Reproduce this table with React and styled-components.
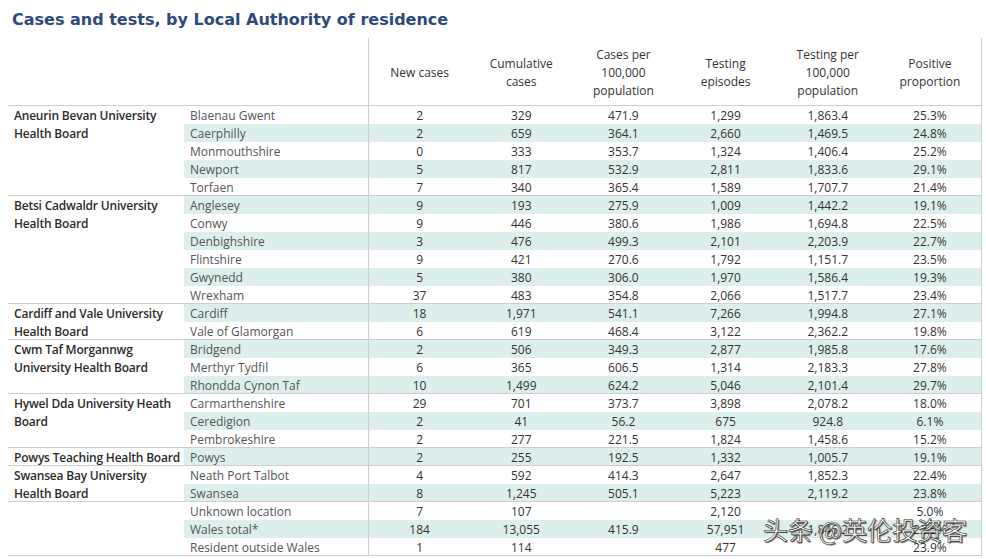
import React from 'react';
import styled, { createGlobalStyle } from 'styled-components';

const GlobalStyle = createGlobalStyle`
  html, body {
    margin: 0;
    padding: 0;
    background: #ffffff;
  }
  body {
    font-family: "Open Sans", "Liberation Sans", sans-serif;
  }
`;

const columns = [
  ['New cases'],
  ['Cumulative', 'cases'],
  ['Cases per', '100,000', 'population'],
  ['Testing', 'episodes'],
  ['Testing per', '100,000', 'population'],
  ['Positive', 'proportion'],
];

const groups = [
  {
    name: 'Aneurin Bevan University Health Board',
    rows: [
      ['Blaenau Gwent', '2', '329', '471.9', '1,299', '1,863.4', '25.3%'],
      ['Caerphilly', '2', '659', '364.1', '2,660', '1,469.5', '24.8%'],
      ['Monmouthshire', '0', '333', '353.7', '1,324', '1,406.4', '25.2%'],
      ['Newport', '5', '817', '532.9', '2,811', '1,833.6', '29.1%'],
      ['Torfaen', '7', '340', '365.4', '1,589', '1,707.7', '21.4%'],
    ],
  },
  {
    name: 'Betsi Cadwaldr University Health Board',
    rows: [
      ['Anglesey', '9', '193', '275.9', '1,009', '1,442.2', '19.1%'],
      ['Conwy', '9', '446', '380.6', '1,986', '1,694.8', '22.5%'],
      ['Denbighshire', '3', '476', '499.3', '2,101', '2,203.9', '22.7%'],
      ['Flintshire', '9', '421', '270.6', '1,792', '1,151.7', '23.5%'],
      ['Gwynedd', '5', '380', '306.0', '1,970', '1,586.4', '19.3%'],
      ['Wrexham', '37', '483', '354.8', '2,066', '1,517.7', '23.4%'],
    ],
  },
  {
    name: 'Cardiff and Vale University Health Board',
    rows: [
      ['Cardiff', '18', '1,971', '541.1', '7,266', '1,994.8', '27.1%'],
      ['Vale of Glamorgan', '6', '619', '468.4', '3,122', '2,362.2', '19.8%'],
    ],
  },
  {
    name: 'Cwm Taf Morgannwg University Health Board',
    rows: [
      ['Bridgend', '2', '506', '349.3', '2,877', '1,985.8', '17.6%'],
      ['Merthyr Tydfil', '6', '365', '606.5', '1,314', '2,183.3', '27.8%'],
      ['Rhondda Cynon Taf', '10', '1,499', '624.2', '5,046', '2,101.4', '29.7%'],
    ],
  },
  {
    name: 'Hywel Dda University Heath Board',
    rows: [
      ['Carmarthenshire', '29', '701', '373.7', '3,898', '2,078.2', '18.0%'],
      ['Ceredigion', '2', '41', '56.2', '675', '924.8', '6.1%'],
      ['Pembrokeshire', '2', '277', '221.5', '1,824', '1,458.6', '15.2%'],
    ],
  },
  {
    name: 'Powys Teaching Health Board',
    rows: [['Powys', '2', '255', '192.5', '1,332', '1,005.7', '19.1%']],
  },
  {
    name: 'Swansea Bay University Health Board',
    rows: [
      ['Neath Port Talbot', '4', '592', '414.3', '2,647', '1,852.3', '22.4%'],
      ['Swansea', '8', '1,245', '505.1', '5,223', '2,119.2', '23.8%'],
    ],
  },
  {
    name: '',
    rows: [
      ['Unknown location', '7', '107', '', '2,120', '', '5.0%'],
      ['Wales total*', '184', '13,055', '415.9', '57,951', '1,846.2', '22.5%'],
      ['Resident outside Wales', '1', '114', '', '477', '', '23.9%'],
    ],
  },
];

export default function App() {
  let index = 0;
  return (
    <Page>
      <GlobalStyle />
      <Title>Cases and tests, by Local Authority of residence</Title>
      <Table>
        <HeaderRow>
          <HeaderBlank />
          {columns.map((lines, i) => (
            <HeaderCell key={i} $first={i === 0}>
              {lines.map((l) => (
                <span key={l}>{l}</span>
              ))}
            </HeaderCell>
          ))}
        </HeaderRow>
        {groups.map((g, gi) => (
          <Group key={gi}>
            <GroupName>{g.name}</GroupName>
            <div>
              {g.rows.map((r) => {
                const shaded = index % 2 === 1;
                index += 1;
                return (
                  <Row key={r[0]} $shaded={shaded}>
                    <Area>{r[0]}</Area>
                    {r.slice(1).map((v, vi) => (
                      <Value key={vi} $first={vi === 0}>
                        {v}
                      </Value>
                    ))}
                  </Row>
                );
              })}
            </div>
          </Group>
        ))}
        <Watermark>头条 @英伦投资客</Watermark>
      </Table>
    </Page>
  );
}

const Page = styled.div`
  width: 986px;
  height: 559px;
  overflow: hidden;
  background: #fff;
`;

const Title = styled.h1`
  margin: 0;
  padding: 10px 0 0 12px;
  height: 29px;
  box-sizing: border-box;
  font-family: "DejaVu Sans", Verdana, sans-serif;
  font-weight: bold;
  font-size: 16px;
  line-height: 20px;
  color: #2e4a7a;
`;

const Table = styled.div`
  position: relative;
  margin: 9px 0 0 8px;
  width: 974px;
  border-right: 1px solid #cfcfcf;
  box-sizing: border-box;
  color: #333;
  font-size: 12px;
`;

const HeaderRow = styled.div`
  display: grid;
  grid-template-columns: 360px repeat(6, 1fr);
  height: 68px;
  border-bottom: 1px solid #cfcfcf;
  box-sizing: border-box;
`;

const HeaderBlank = styled.div``;

const HeaderCell = styled.div`
  display: flex;
  flex-direction: column;
  align-items: center;
  justify-content: center;
  padding-top: 2px;
  line-height: 18px;
  text-align: center;
  color: #333;
  border-left: ${(p) => (p.$first ? '1px solid #cfcfcf' : 'none')};
`;

const Group = styled.div`
  position: relative;
  display: grid;
  grid-template-columns: 176px 1fr;

  &::after {
    content: '';
    position: absolute;
    left: 0;
    right: 0;
    bottom: 0;
    height: 1px;
    background: #cfcfcf;
  }
`;

const GroupName = styled.div`
  height: 0;
  padding: 1px 0 0 6px;
  line-height: 18px;
  font-weight: 600;
  letter-spacing: -0.2px;
  color: #2b2b2b;
`;

const Row = styled.div`
  display: grid;
  grid-template-columns: 184px repeat(6, 1fr);
  height: 18px;
  line-height: 20px;
  background: ${(p) => (p.$shaded ? '#ddefec' : 'transparent')};
`;

const Area = styled.div`
  height: 18px;
  padding-left: 6px;
  color: #555;
  white-space: nowrap;
`;

const Value = styled.div`
  height: 18px;
  text-align: center;
  color: #333;
  border-left: ${(p) => (p.$first ? '1px solid #cfcfcf' : 'none')};
`;

const Watermark = styled.div`
  position: absolute;
  left: 755px;
  top: 476px;
  font-family: "Noto Sans CJK SC", sans-serif;
  font-size: 25px;
  line-height: 30px;
  color: #fff;
  white-space: nowrap;
  -webkit-text-stroke: 0.6px #333;
  text-shadow: 1px 1px 1px rgba(0, 0, 0, 0.7);
`;
